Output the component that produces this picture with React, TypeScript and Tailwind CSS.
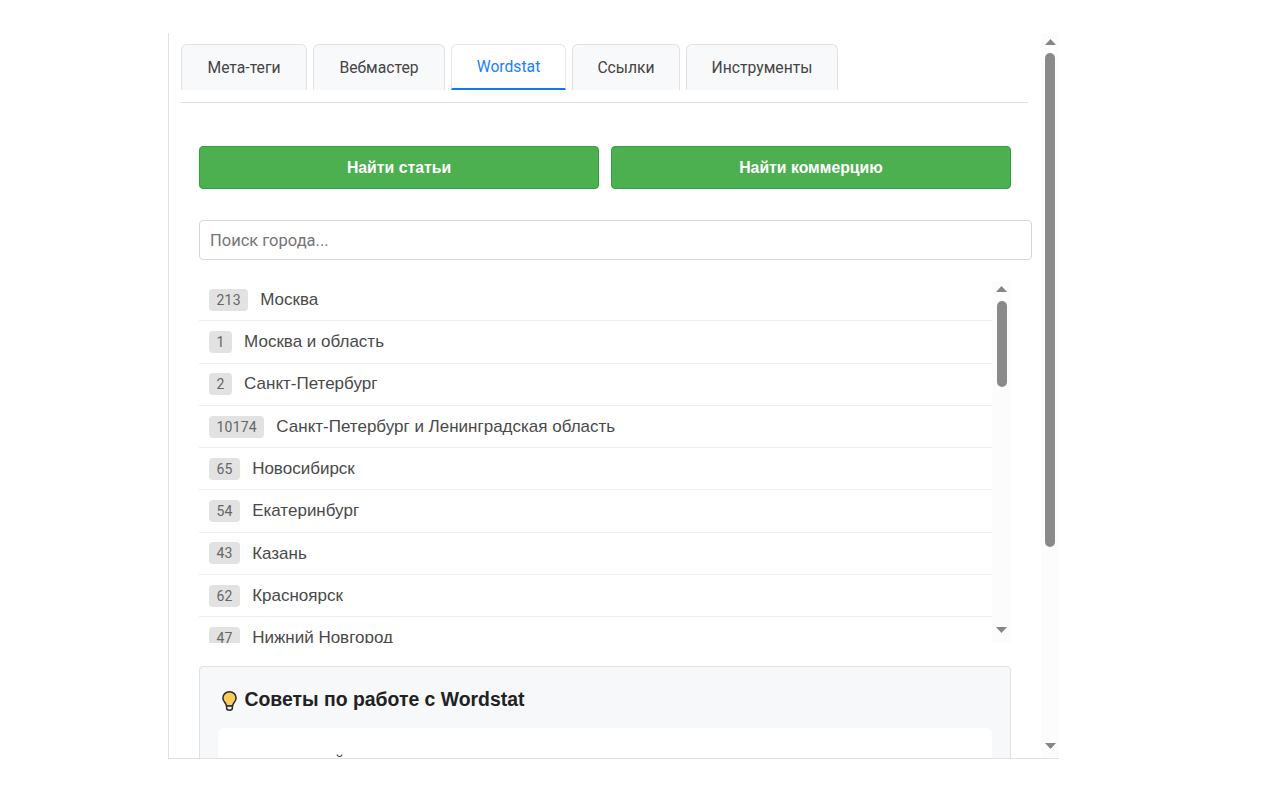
import { Fragment } from 'react';

const tabs = [
  { name: 'Мета-теги', width: 'w-[126px]' },
  { name: 'Вебмастер', width: 'w-[132px]' },
  { name: 'Wordstat', width: 'w-[115px]', active: true },
  { name: 'Ссылки', width: 'w-[108px]' },
  { name: 'Инструменты', width: 'w-[152px]' },
];

const cities = [
  { id: '213', name: 'Москва' },
  { id: '1', name: 'Москва и область' },
  { id: '2', name: 'Санкт-Петербург' },
  { id: '10174', name: 'Санкт-Петербург и Ленинградская область' },
  { id: '65', name: 'Новосибирск' },
  { id: '54', name: 'Екатеринбург' },
  { id: '43', name: 'Казань' },
  { id: '62', name: 'Красноярск' },
  { id: '47', name: 'Нижний Новгород' },
];

function Arrow({ down }: { down?: boolean }) {
  return (
    <svg width="11" height="6" viewBox="0 0 11 6" className="block shrink-0">
      <polygon points={down ? '0,0 11,0 5.5,6' : '0,6 11,6 5.5,0'} fill="#858585" />
    </svg>
  );
}

function Bulb() {
  return (
    <svg width="17" height="22" viewBox="0 0 18 22" className="block shrink-0">
      <path d="M9 1.2C4.9 1.2 2 4.2 2 7.8c0 2.9 1.9 4.4 3 6.2.5.9.7 1.5.8 2.2h6.4c.1-.7.3-1.3.8-2.2 1.1-1.8 3-3.3 3-6.2 0-3.6-2.9-6.6-7-6.6z" fill="#fdcb58" stroke="#2b2b2b" strokeWidth="1.6" />
      <path d="M6 16.4h6v2.4c0 1.1-1.2 2-3 2s-3-.9-3-2z" fill="#f4f4f4" stroke="#2b2b2b" strokeWidth="1.6" />
    </svg>
  );
}

export default function App() {
  return (
    <div className="h-[800px] w-[1280px] overflow-hidden bg-white pl-[168px] pt-[33px] font-['Liberation_Sans',sans-serif]">
      <div className="flex h-[726px] w-[891px] border-b border-l border-[#e4e0e8]">
        <div className="h-full w-[872px] overflow-hidden pl-3 pt-[11px]">
          <div className="flex h-[46px] gap-1.5">
            {tabs.map((tab) =>
              tab.active ? (
                <div
                  key={tab.name}
                  className={`${tab.width} flex h-[46px] items-center justify-center rounded-t-md border border-b-2 border-[#e6e6e6] border-b-[#1a73f0] bg-white font-['Roboto',sans-serif] text-[15.7px] text-[#1a80ff]`}
                >
                  {tab.name}
                </div>
              ) : (
                <div
                  key={tab.name}
                  className={`${tab.width} flex h-[46px] items-center justify-center rounded-t-md border border-b-0 border-[#e2e2e2] bg-[#f8f9fa] font-['Roboto',sans-serif] text-[15.7px] text-[#444444]`}
                >
                  {tab.name}
                </div>
              ),
            )}
          </div>
          <div className="mt-3 h-px w-[847px] bg-[#dfdfe2]" />

          <div className="ml-[18px] mt-[43px] flex w-[812px] gap-3">
            <button className="h-[43px] flex-1 rounded border border-[#2aa63a] bg-[#4caf50] text-[15.8px] font-bold text-white">
              Найти статьи
            </button>
            <button className="h-[43px] flex-1 rounded border border-[#2aa63a] bg-[#4caf50] text-[15.8px] font-bold text-white">
              Найти коммерцию
            </button>
          </div>

          <input
            placeholder="Поиск города..."
            className="ml-[18px] mt-[31px] block h-10 w-[833px] rounded border-[1.5px] border-[#d6d6d6] bg-white px-2.5 font-['Roboto',sans-serif] text-[16.5px] text-[#333333] outline-none placeholder:text-[#757575]"
          />

          <div className="ml-[18px] mt-[21px] flex h-[362px] w-[812px] overflow-hidden">
            <div className="w-[793px]">
              {cities.map((city, i) => (
                <Fragment key={city.id}>
                  {i > 0 && <div className="h-px bg-[#eeeeee]" />}
                  <div className={`flex ${i === 0 ? 'h-[39.3px] pb-0.5' : 'h-[41.3px]'} items-center gap-3 pl-2.5`}>
                    <span className="flex h-[22px] items-center rounded bg-[#e2e2e2] px-[7.5px] font-['Roboto',sans-serif] text-sm tracking-[0.2px] text-[#666666]">
                      {city.id}
                    </span>
                    <span className="text-[17px] text-[#4a4a4a]">{city.name}</span>
                  </div>
                </Fragment>
              ))}
            </div>
            <div className="flex h-full w-[19px] flex-col items-center bg-[#fcfcfc]">
              <div className="mt-[5px]"><Arrow /></div>
              <div className="mt-[9px] h-[86px] w-2.5 rounded-full bg-[#8a8a8a]" />
              <div className="mb-[10px] mt-auto"><Arrow down /></div>
            </div>
          </div>

          <div className="ml-[18px] mt-[23px] h-[200px] w-[812px] rounded border-[1.5px] border-[#e2e2e5] bg-[#f7f8fa] pl-[17.5px] pr-[18.5px] pt-[20.5px]">
            <div className="flex h-6 items-center gap-[7px] text-[19.4px] font-bold text-[#222222]">
              <span className="ml-[3px] mt-0.5"><Bulb /></span>
              <span>Советы по работе с Wordstat</span>
            </div>
            <div className="mt-[16.5px] h-[100px] rounded-md bg-white pl-[55px] pt-[22px] text-base text-[#444444]">
              ключевой
            </div>
          </div>
        </div>

        <div className="flex h-full w-[18px] flex-col items-center bg-[#fcfcfc]">
          <div className="mt-1.5"><Arrow /></div>
          <div className="mt-[8px] h-[494px] w-[10.5px] rounded-full bg-[#8a8a8a]" />
          <div className="mb-[9px] mt-auto"><Arrow down /></div>
        </div>
      </div>
    </div>
  );
}
